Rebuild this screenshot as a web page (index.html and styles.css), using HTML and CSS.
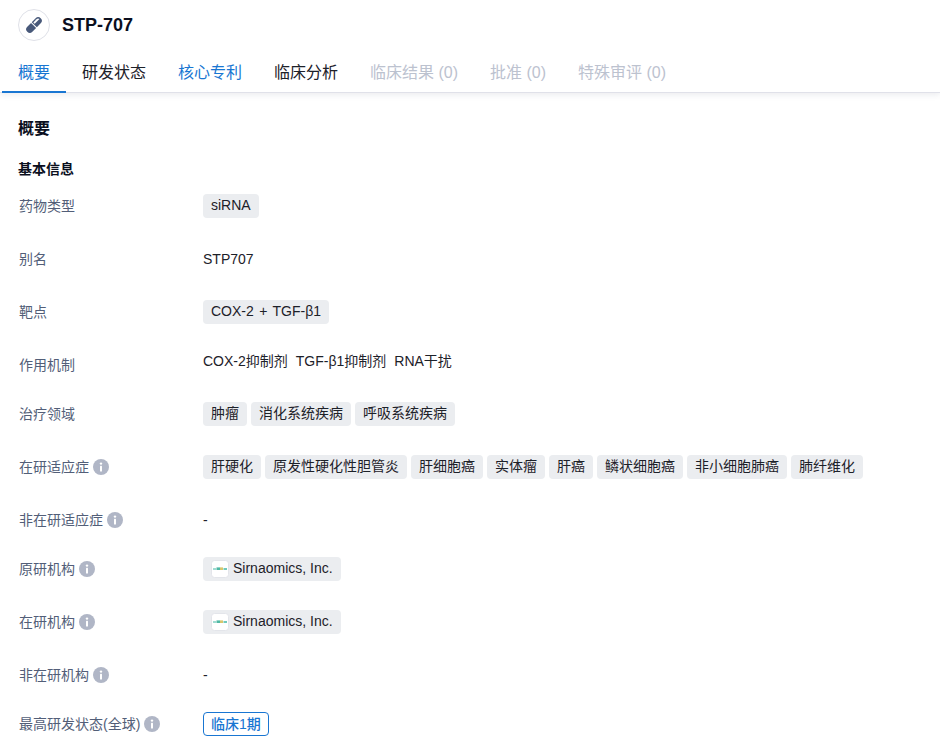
FILE: index.html
```html
<!DOCTYPE html>
<html lang="zh-CN">
<head>
<meta charset="utf-8">
<title>STP-707</title>
<link rel="stylesheet" href="styles.css">
</head>
<body>
<header class="top">
  <div class="title-row">
    <span class="drug-icon">
      <svg width="20" height="20" viewBox="0 0 20 20"><g transform="rotate(-45 10 10)"><path d="M9.4 6.4H4.1a3.6 3.6 0 0 0 0 7.2h5.3z" fill="#48597a"/><path d="M10.4 6.4h5.5a3.6 3.6 0 0 1 0 7.2h-5.5z" fill="#48597a"/><path d="M11.4 7.7h4.5a2.3 2.3 0 0 1 2.2 1.9h-6.7z" fill="#fff"/></g></svg>
    </span>
    <h1 class="drug-name">STP-707</h1>
  </div>
  <nav class="tabs">
    <span class="tab active">概要</span>
    <span class="tab">研发状态</span>
    <span class="tab link">核心专利</span>
    <span class="tab">临床分析</span>
    <span class="tab off">临床结果 (0)</span>
    <span class="tab off">批准 (0)</span>
    <span class="tab off">特殊审评 (0)</span>
  </nav>
</header>
<main class="content">
  <h2 class="section-title">概要</h2>
  <h3 class="sub-title">基本信息</h3>
  <div class="row"><div class="label">药物类型</div><div class="value"><span class="tag">siRNA</span></div></div>
  <div class="row"><div class="label">别名</div><div class="value">STP707</div></div>
  <div class="row"><div class="label">靶点</div><div class="value"><span class="tag target">COX-2 + TGF-β1</span></div></div>
  <div class="row short"><div class="label">作用机制</div><div class="value raised"><span>COX-2抑制剂</span><span>TGF-β1抑制剂</span><span>RNA干扰</span></div></div>
  <div class="row"><div class="label">治疗领域</div><div class="value"><span class="tag">肿瘤</span><span class="tag">消化系统疾病</span><span class="tag">呼吸系统疾病</span></div></div>
  <div class="row"><div class="label">在研适应症<svg class="info" viewBox="0 0 16 16"><use href="#i"/></svg></div><div class="value"><span class="tag">肝硬化</span><span class="tag">原发性硬化性胆管炎</span><span class="tag">肝细胞癌</span><span class="tag">实体瘤</span><span class="tag">肝癌</span><span class="tag">鳞状细胞癌</span><span class="tag">非小细胞肺癌</span><span class="tag">肺纤维化</span></div></div>
  <div class="row short"><div class="label">非在研适应症<svg class="info" viewBox="0 0 16 16"><use href="#i"/></svg></div><div class="value">-</div></div>
  <div class="row"><div class="label">原研机构<svg class="info" viewBox="0 0 16 16"><use href="#i"/></svg></div><div class="value"><span class="tag org"><svg class="logo" viewBox="0 0 18 18"><rect x=".5" y=".5" width="17" height="17" rx="3" fill="#fff" stroke="#e3e5ea"/><rect x="2" y="8" width="3" height="2" fill="#9fdcd2"/><rect x="5.5" y="7.4" width="3.5" height="2.6" fill="#4fb8a4"/><rect x="9" y="7.4" width="3" height="2.6" fill="#d8c66c"/><rect x="12.5" y="8" width="3.5" height="2" fill="#6fc9bb"/></svg><span class="org-name">Sirnaomics, Inc.</span></span></div></div>
  <div class="row"><div class="label">在研机构<svg class="info" viewBox="0 0 16 16"><use href="#i"/></svg></div><div class="value"><span class="tag org"><svg class="logo" viewBox="0 0 18 18"><rect x=".5" y=".5" width="17" height="17" rx="3" fill="#fff" stroke="#e3e5ea"/><rect x="2" y="8" width="3" height="2" fill="#9fdcd2"/><rect x="5.5" y="7.4" width="3.5" height="2.6" fill="#4fb8a4"/><rect x="9" y="7.4" width="3" height="2.6" fill="#d8c66c"/><rect x="12.5" y="8" width="3.5" height="2" fill="#6fc9bb"/></svg><span class="org-name">Sirnaomics, Inc.</span></span></div></div>
  <div class="row short"><div class="label">非在研机构<svg class="info" viewBox="0 0 16 16"><use href="#i"/></svg></div><div class="value">-</div></div>
  <div class="row"><div class="label">最高研发状态(全球)<svg class="info" viewBox="0 0 16 16"><use href="#i"/></svg></div><div class="value"><span class="status">临床1期</span></div></div>
</main>
<svg class="defs" width="0" height="0"><defs><g id="i"><circle cx="8" cy="8" r="8" fill="#b0b6c6"/><circle cx="8" cy="4.6" r="1.2" fill="#fff"/><rect x="7" y="6.8" width="2" height="5.6" rx=".5" fill="#fff"/></g></defs></svg>
</body>
</html>
```

FILE: styles.css
```css
* { box-sizing: border-box; }
html, body { margin: 0; padding: 0; background: #fff; }
body {
  font-family: "Liberation Sans", "Noto Sans CJK SC", sans-serif;
  font-size: 14px;
  color: #1d2129;
  overflow: hidden;
}
.top {
  height: 93px;
  border-bottom: 1px solid #e0e1e9;
  box-shadow: 0 2px 6px rgba(60, 70, 100, .1);
}
.title-row {
  display: flex;
  align-items: center;
  gap: 12px;
  height: 50px;
  padding-left: 18px;
}
.drug-icon {
  width: 32px;
  height: 32px;
  border: 1px solid #dfe1e8;
  border-radius: 50%;
  display: flex;
  align-items: center;
  justify-content: center;
}
.drug-name {
  margin: 0;
  font-size: 18px;
  line-height: 24px;
  font-weight: 700;
  color: #0b0f1e;
}
.tabs {
  display: flex;
  padding-left: 2px;
  height: 43px;
}
.tab {
  padding: 0 16px;
  font-size: 16px;
  line-height: 46px;
  height: 43px;
  color: #1d2129;
}
.tab.active { color: #1976d2; border-bottom: 2px solid #1976d2; }
.tab.link { color: #1976d2; }
.tab.off { color: #bcc2cf; }
.content { padding: 0 18px; }
.section-title {
  margin: 0;
  padding-top: 24px;
  font-size: 16px;
  line-height: 24px;
  font-weight: 700;
  color: #0b0f1e;
}
.sub-title {
  margin: 0;
  padding-top: 18px;
  padding-bottom: 15px;
  font-size: 14px;
  line-height: 20px;
  font-weight: 700;
  color: #0b0f1e;
}
.row {
  display: flex;
  height: 24px;
  margin-bottom: 29px;
}
.row.short { margin-bottom: 25px; }
.label {
  width: 185px;
  flex: none;
  display: flex;
  align-items: center;
  gap: 4px;
  padding-left: 1px;
  line-height: 24px;
  color: #525e78;
  white-space: nowrap;
}
.value {
  display: flex;
  align-items: center;
  gap: 4px;
  line-height: 24px;
  white-space: nowrap;
}
.value.raised { gap: 8px; height: 24px; margin-top: -4px; }
.tag {
  display: inline-flex;
  align-items: center;
  height: 24px;
  padding: 0 8px 2px;
  border-radius: 4px;
  background: #ebedf0;
}
.tag.target { word-spacing: 1.5px; }
.tag.org { gap: 4px; padding-bottom: 0; }
.org-name { margin-bottom: 2px; }
.logo { width: 18px; height: 18px; }
.info { width: 16px; height: 16px; flex: none; }
.status {
  display: inline-block;
  height: 24px;
  padding: 0 7px;
  border: 1px solid #1976d2;
  border-radius: 4px;
  line-height: 22px;
  font-weight: 500;
  color: #1976d2;
}
.defs { position: absolute; }
```
